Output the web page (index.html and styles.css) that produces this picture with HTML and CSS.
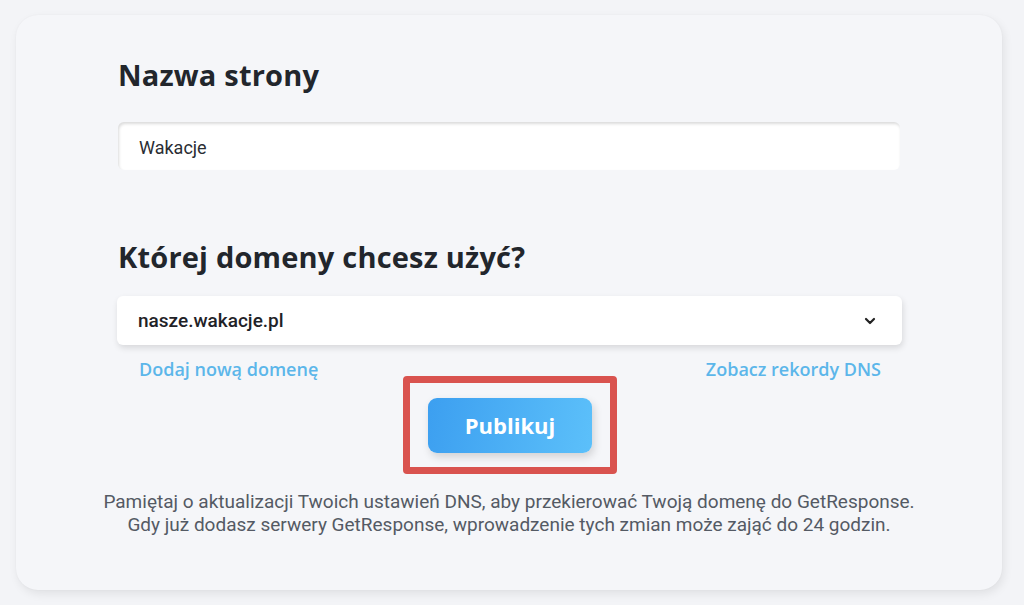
FILE: index.html
```html
<!DOCTYPE html>
<html lang="pl">
<head>
    <meta charset="UTF-8">
    <meta name="viewport" content="width=device-width, initial-scale=1.0">
    <title>Publikacja strony</title>
    <link rel="stylesheet" href="styles.css">
</head>
<body>
    <div class="card">
        <div class="content">
            <h2 class="title">Nazwa strony</h2>
            <div class="text-input">Wakacje</div>

            <h2 class="title title-domain">Której domeny chcesz użyć?</h2>
            <div class="select">
                <span>nasze.wakacje.pl</span>
                <svg class="chevron" width="12" height="8" viewBox="0 0 12 8">
                    <path d="M2 2l4 4 4-4" fill="none" stroke="#222" stroke-width="2.2" stroke-linecap="round" stroke-linejoin="round"/>
                </svg>
            </div>
            <div class="links">
                <a href="#">Dodaj nową domenę</a>
                <a href="#">Zobacz rekordy DNS</a>
            </div>

            <div class="publish">
                <div class="highlight">
                    <button class="publish-btn">Publikuj</button>
                </div>
            </div>

            <p class="note">
                Pamiętaj o aktualizacji Twoich ustawień DNS, aby przekierować Twoją domenę do GetResponse.<br>
                Gdy już dodasz serwery GetResponse, wprowadzenie tych zmian może zająć do 24 godzin.
            </p>
        </div>
    </div>
</body>
</html>
```

FILE: styles.css
```css
body {
    margin: 0;
    padding: 15px 22px 15px 16px;
    background-color: #f3f4f7;
    font-family: Roboto, "Noto Sans", sans-serif;
}
.card {
    height: 575px;
    box-sizing: border-box;
    background: #f5f6f9;
    border-radius: 22px;
    box-shadow: 2px 4px 10px rgba(0, 0, 0, 0.08), 0 0 2px rgba(0, 0, 0, 0.04);
    padding: 40px 100px 0 101px;
}
.content {
    width: 785px;
}
.title {
    margin: 0 0 0 1px;
    font-family: "Open Sans", sans-serif;
    font-weight: 700;
    font-size: 29px;
    letter-spacing: 0.2px;
    line-height: 40px;
    color: #22262c;
}
.title-domain {
    margin-top: 67px;
}
.text-input {
    margin: 27px 2px 0 1px;
    height: 48px;
    box-sizing: border-box;
    padding: 3px 0 0 21px;
    line-height: 45px;
    background: #fff;
    border-radius: 6px;
    box-shadow: inset 1px 2px 3px rgba(0, 0, 0, 0.14);
    font-size: 18px;
    color: #2a2d33;
}
.select {
    margin-top: 19px;
    height: 49px;
    display: flex;
    align-items: center;
    justify-content: space-between;
    padding: 0 26px 0 21px;
    background: #fff;
    border-radius: 6px;
    box-shadow: 1px 3px 6px rgba(0, 0, 0, 0.12);
    font-size: 19px;
    font-weight: 500;
    color: #1f2227;
}
.links {
    display: flex;
    justify-content: space-between;
    padding: 0 21px 0 22px;
    margin-top: 12px;
}
.links a {
    font-family: "Open Sans", sans-serif;
    font-size: 18px;
    font-weight: 600;
    color: #5cb6ea;
    text-decoration: none;
}
.publish {
    display: flex;
    justify-content: center;
    margin-top: -5px;
    padding-left: 1px;
}
.highlight {
    width: 200px;
    height: 84px;
    border: 7px solid #d9534f;
    border-radius: 4px;
    display: flex;
    align-items: center;
    justify-content: center;
}
.publish-btn {
    width: 164px;
    height: 55px;
    border: none;
    border-radius: 9px;
    background: linear-gradient(100deg, #3c9ff0, #5cc0fa);
    box-shadow: 2px 4px 8px rgba(0, 0, 0, 0.15);
    color: #fff;
    font-family: "Open Sans", sans-serif;
    font-size: 22px;
    font-weight: 700;
    cursor: pointer;
}
.note {
    margin: 16px 0 0 -101px;
    width: 986px;
    text-align: center;
    font-size: 19px;
    line-height: 23px;
    color: #545a64;
}
```
